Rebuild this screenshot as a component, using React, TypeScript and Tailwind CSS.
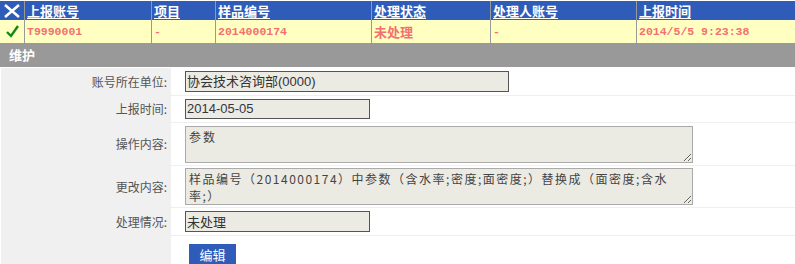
import React from 'react';

const cols = [
  { w: 'w-[127px]', head: '上报账号', val: 'T9990001', mono: true },
  { w: 'w-[64px]', head: '项目', val: '-', mono: true },
  { w: 'w-[156px]', head: '样品编号', val: '2014000174', mono: true },
  { w: 'w-[119px]', head: '处理状态', val: '未处理', mono: false },
  { w: 'w-[146px]', head: '处理人账号', val: '-', mono: true },
  { w: 'flex-1', head: '上报时间', val: '2014/5/5 9:23:38', mono: true },
];

const changeText =
  '样品编号（2014000174）中参数（含水率;密度;面密度;）替换成（面密度;含水\n率;）';

function FormRow({ label, h, children }: { label: string; h: string; children?: React.ReactNode }) {
  return (
    <div className={`flex ${h} border-b border-[#efefef]`}>
      <div className="w-[170px] bg-[#f0f0f0] flex items-center justify-end pr-[4px] text-[12px] text-[#555]">
        {label}
      </div>
      <div className="flex-1 flex items-center pl-[14px] bg-white">{children}</div>
    </div>
  );
}

export default function App() {
  return (
    <div
      className="w-[795px] h-[264px] overflow-hidden bg-white"
      style={{ fontFamily: '"Noto Sans CJK SC", "Liberation Sans", sans-serif' }}
    >
      {/* list header */}
      <div className="border-t border-white">
        <div className="flex h-[19px] bg-[#2e5cb8] text-white text-[13px] font-bold">
          <div className="w-[24px] flex items-center justify-center">
            <svg width="18" height="14" viewBox="0 0 18 14">
              <path d="M2 1 L16 13 M16 1 L2 13" stroke="white" strokeWidth="2.6" />
            </svg>
          </div>
          {cols.map((c) => (
            <div key={c.head} className={`${c.w} border-l border-[#999] pl-[2px] flex items-center leading-none`}>
              <span className="underline underline-offset-2">{c.head}</span>
            </div>
          ))}
        </div>
        <div className="flex h-[23px] bg-[#ffffc2] text-[#f46f6f] font-bold">
          <div className="w-[24px] flex items-center justify-center">
            <svg width="13" height="13" viewBox="0 0 13 13">
              <path d="M1 7 L5 11 L12 1" stroke="#118a11" strokeWidth="2.4" fill="none" />
            </svg>
          </div>
          {cols.map((c) => (
            <div
              key={c.head}
              className={`${c.w} border-l border-[#999] pl-[2px] flex items-center ${c.mono ? 'text-[11.5px]' : 'text-[13px]'}`}
              style={c.mono ? { fontFamily: '"Liberation Mono", monospace' } : undefined}
            >
              {c.val}
            </div>
          ))}
        </div>
      </div>

      {/* section bar */}
      <div className="h-[24px] bg-[#999999] flex items-center pl-[9px] text-white text-[13px] font-bold">维护</div>

      {/* form */}
      <div className="pt-[1px] pl-[1px]">
        <FormRow label="账号所在单位:" h="h-[28px]">
          <div className="w-[324px] h-[21px] border border-[#555] bg-[#ebeae3] text-[13px] text-[#333] flex items-center pl-[1px]" style={{ fontFamily: '"Liberation Sans", "Noto Sans CJK SC", sans-serif' }}>
            协会技术咨询部(0000)
          </div>
        </FormRow>
        <FormRow label="上报时间:" h="h-[27px]">
          <div className="w-[185px] h-[20px] border border-[#555] bg-[#ebeae3] text-[13px] text-[#334] flex items-center pl-[1px]" style={{ fontFamily: '"Liberation Sans", sans-serif' }}>
            2014-05-05
          </div>
        </FormRow>
        <FormRow label="操作内容:" h="h-[43px]">
          <textarea
            readOnly
            value="参数"
            className="w-[508px] h-[37px] border border-[#aaa] bg-[#ebeae3] text-[12px] text-[#444] px-[3px] py-[1px] tracking-[2px] leading-[17px] outline-none"
          />
        </FormRow>
        <FormRow label="更改内容:" h="h-[42px]">
          <textarea
            readOnly
            value={changeText}
            className="w-[508px] h-[37px] border border-[#aaa] bg-[#ebeae3] text-[12px] text-[#444] px-[3px] py-[1px] tracking-[1.5px] leading-[17px] outline-none whitespace-pre"
          />
        </FormRow>
        <FormRow label="处理情况:" h="h-[28px]">
          <div className="w-[185px] h-[21px] border border-[#555] bg-[#ebeae3] text-[13px] text-[#333] flex items-center pl-[1px]">
            未处理
          </div>
        </FormRow>
        <div className="flex h-[28px]">
          <div className="w-[170px] bg-[#f0f0f0]" />
          <div className="flex-1 pl-[18px] pt-[8px]">
            <button className="w-[47px] h-[20px] bg-[#2e5cb8] text-white text-[13px] leading-none flex items-center justify-center">
              编辑
            </button>
          </div>
        </div>
      </div>
    </div>
  );
}
